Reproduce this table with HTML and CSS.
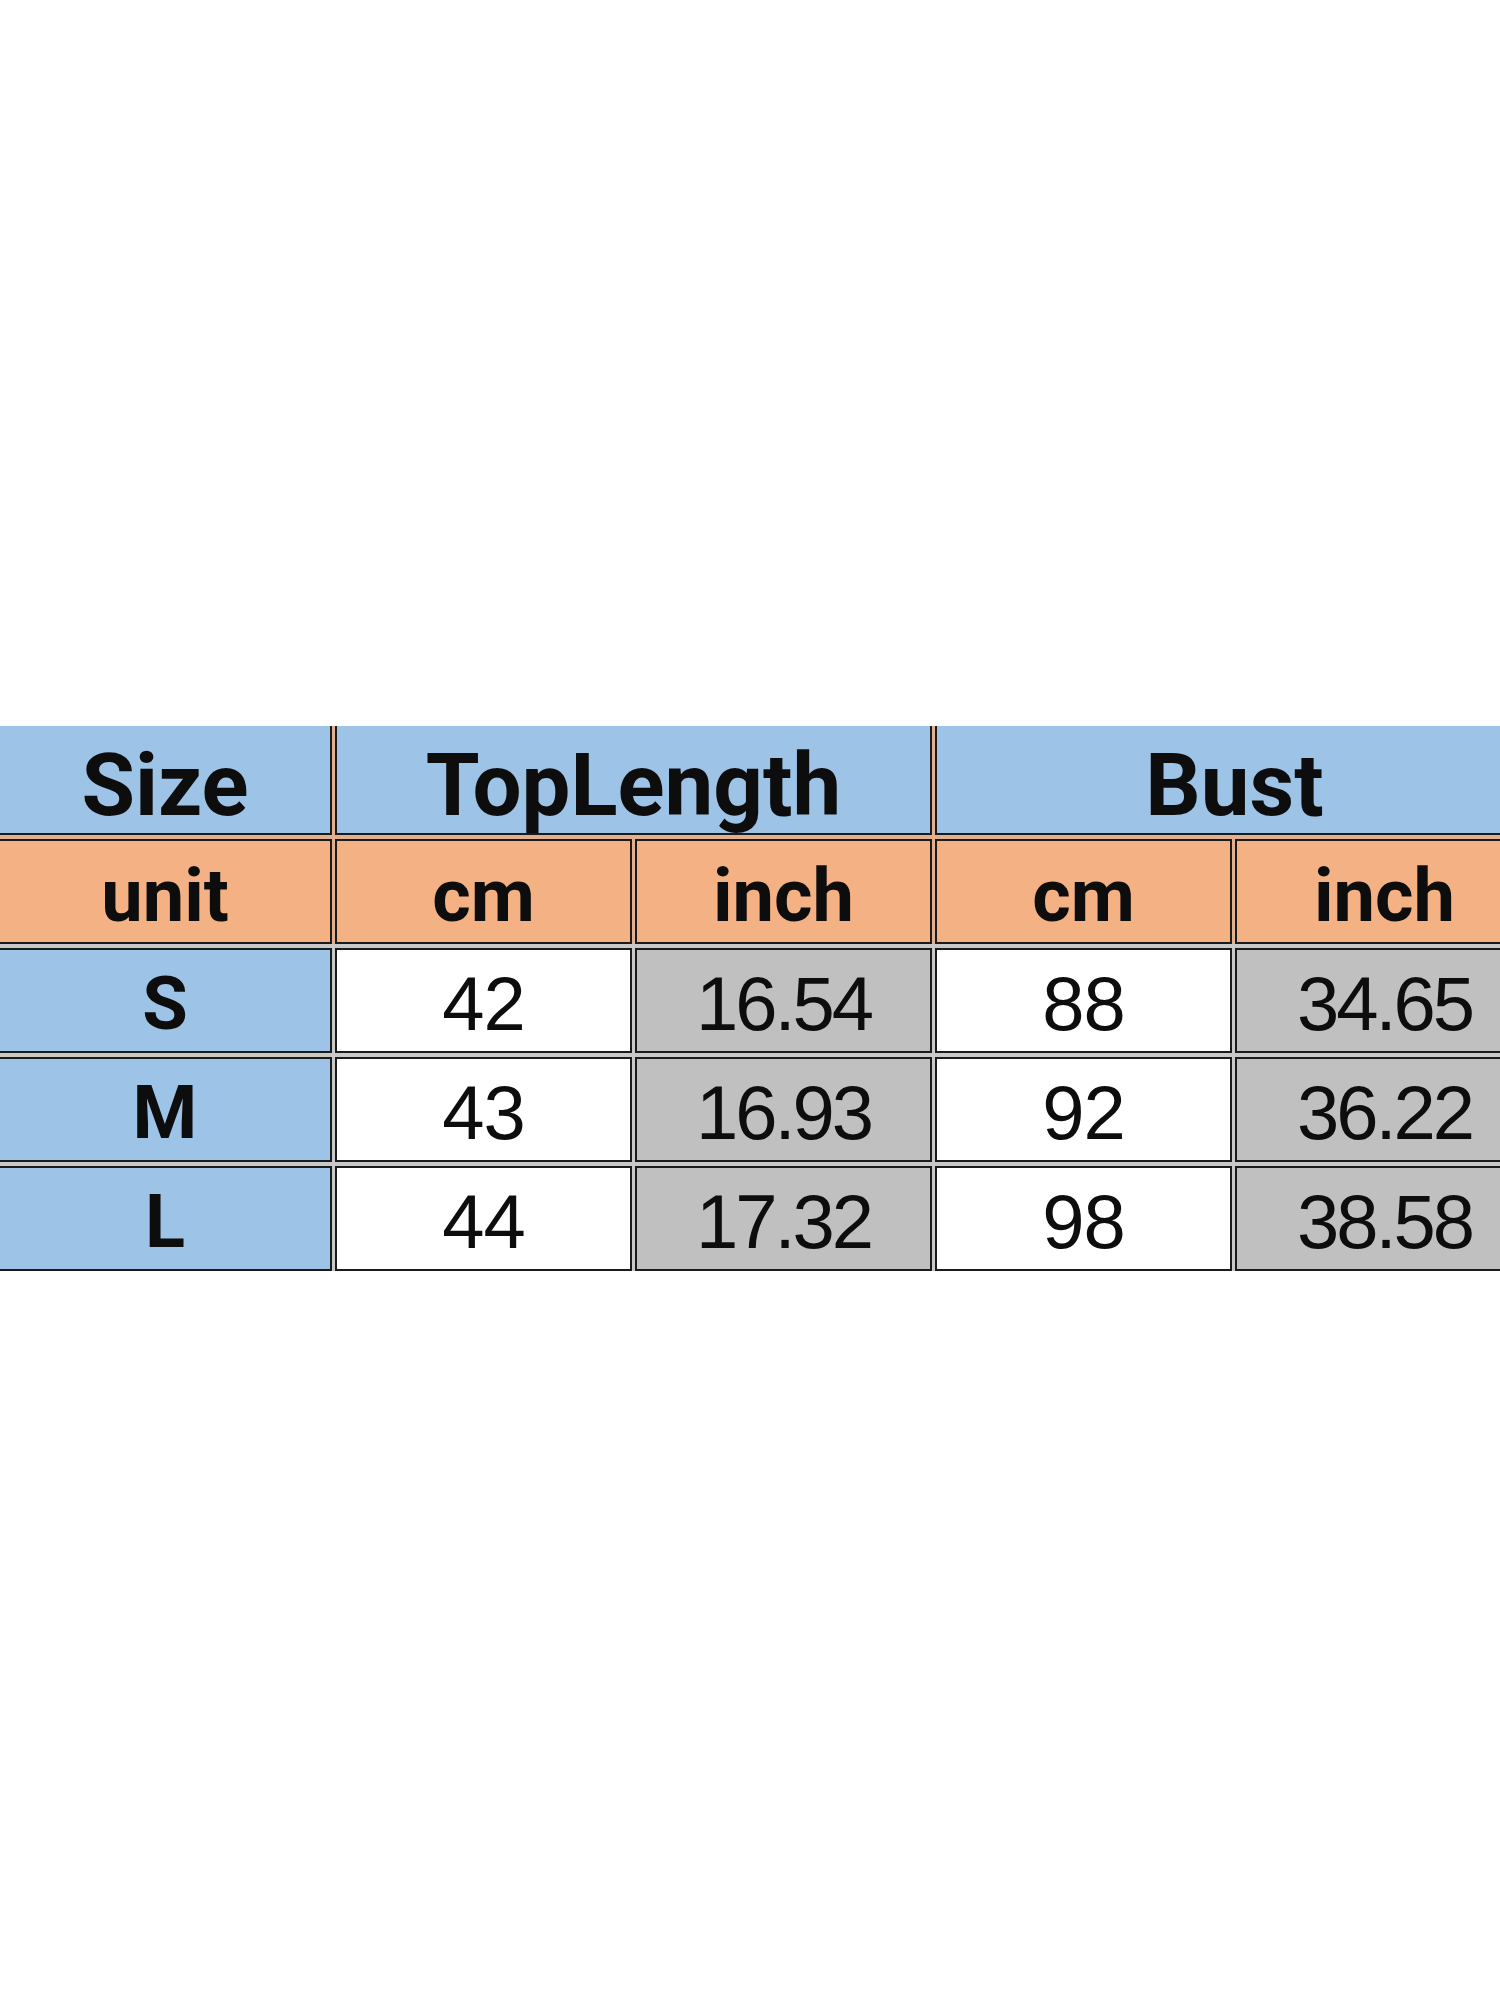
FILE: index.html
```html
<!DOCTYPE html>
<html lang="en">
<head>
<meta charset="utf-8">
<title>Size chart</title>
<link rel="stylesheet" href="styles.css">
</head>
<body>
<main class="page">
  <div class="chart">
    <div class="cell head first">Size</div>
    <div class="cell head span2">TopLength</div>
    <div class="cell head span2 last">Bust</div>

    <div class="cell unit first">unit</div>
    <div class="cell unit">cm</div>
    <div class="cell unit">inch</div>
    <div class="cell unit">cm</div>
    <div class="cell unit last">inch</div>

    <div class="cell size first">S</div>
    <div class="cell num">42</div>
    <div class="cell num dec gray">16.54</div>
    <div class="cell num">88</div>
    <div class="cell num dec gray last">34.65</div>

    <div class="cell size first">M</div>
    <div class="cell num">43</div>
    <div class="cell num dec gray">16.93</div>
    <div class="cell num">92</div>
    <div class="cell num dec gray last">36.22</div>

    <div class="cell size first">L</div>
    <div class="cell num">44</div>
    <div class="cell num dec gray">17.32</div>
    <div class="cell num">98</div>
    <div class="cell num dec gray last">38.58</div>
  </div>
</main>
</body>
</html>
```

FILE: styles.css
```css
html, body {
  margin: 0;
  padding: 0;
  background: #ffffff;
  overflow: hidden;
}

.page {
  width: 1500px;
  height: 2000px;
  padding-top: 726px;
  box-sizing: border-box;
  overflow: hidden;
}

.chart {
  display: grid;
  grid-template-columns: 332px 297px 297px 297px 297px;
  grid-template-rows: 109px 105px 105px 105px 105px;
  gap: 4px 3px;
  width: 1532px;
  background: linear-gradient(#e2b08e 0 218px, #c9c9c9 218px);
}

.cell {
  display: flex;
  align-items: center;
  justify-content: center;
  box-sizing: border-box;
  border: 2px solid #1b1b1b;
  color: #0d0d0d;
  line-height: 1;
}

.first { border-left: none; }
.last { border-right: none; }

.span2 { grid-column: span 2; }

.head {
  background: #9dc3e6;
  border-top: none;
  font-family: Roboto, "Liberation Sans", sans-serif;
  font-weight: 700;
  font-size: 87px;
  padding-top: 12px;
}

.unit {
  background: #f4b183;
  font-family: Roboto, "Liberation Sans", sans-serif;
  font-weight: 700;
  font-size: 74px;
  padding-top: 8px;
}

.size {
  background: #9dc3e6;
  font-family: Roboto, "Liberation Sans", sans-serif;
  font-weight: 700;
  font-size: 74px;
  padding-top: 6px;
}

.num {
  background: #ffffff;
  font-family: "Liberation Sans", Arial, sans-serif;
  font-weight: 400;
  font-size: 76px;
  padding-top: 6px;
  letter-spacing: -1px;
}

.num.dec { letter-spacing: -3px; }

.num.gray { background: #c0c0c0; }
```
